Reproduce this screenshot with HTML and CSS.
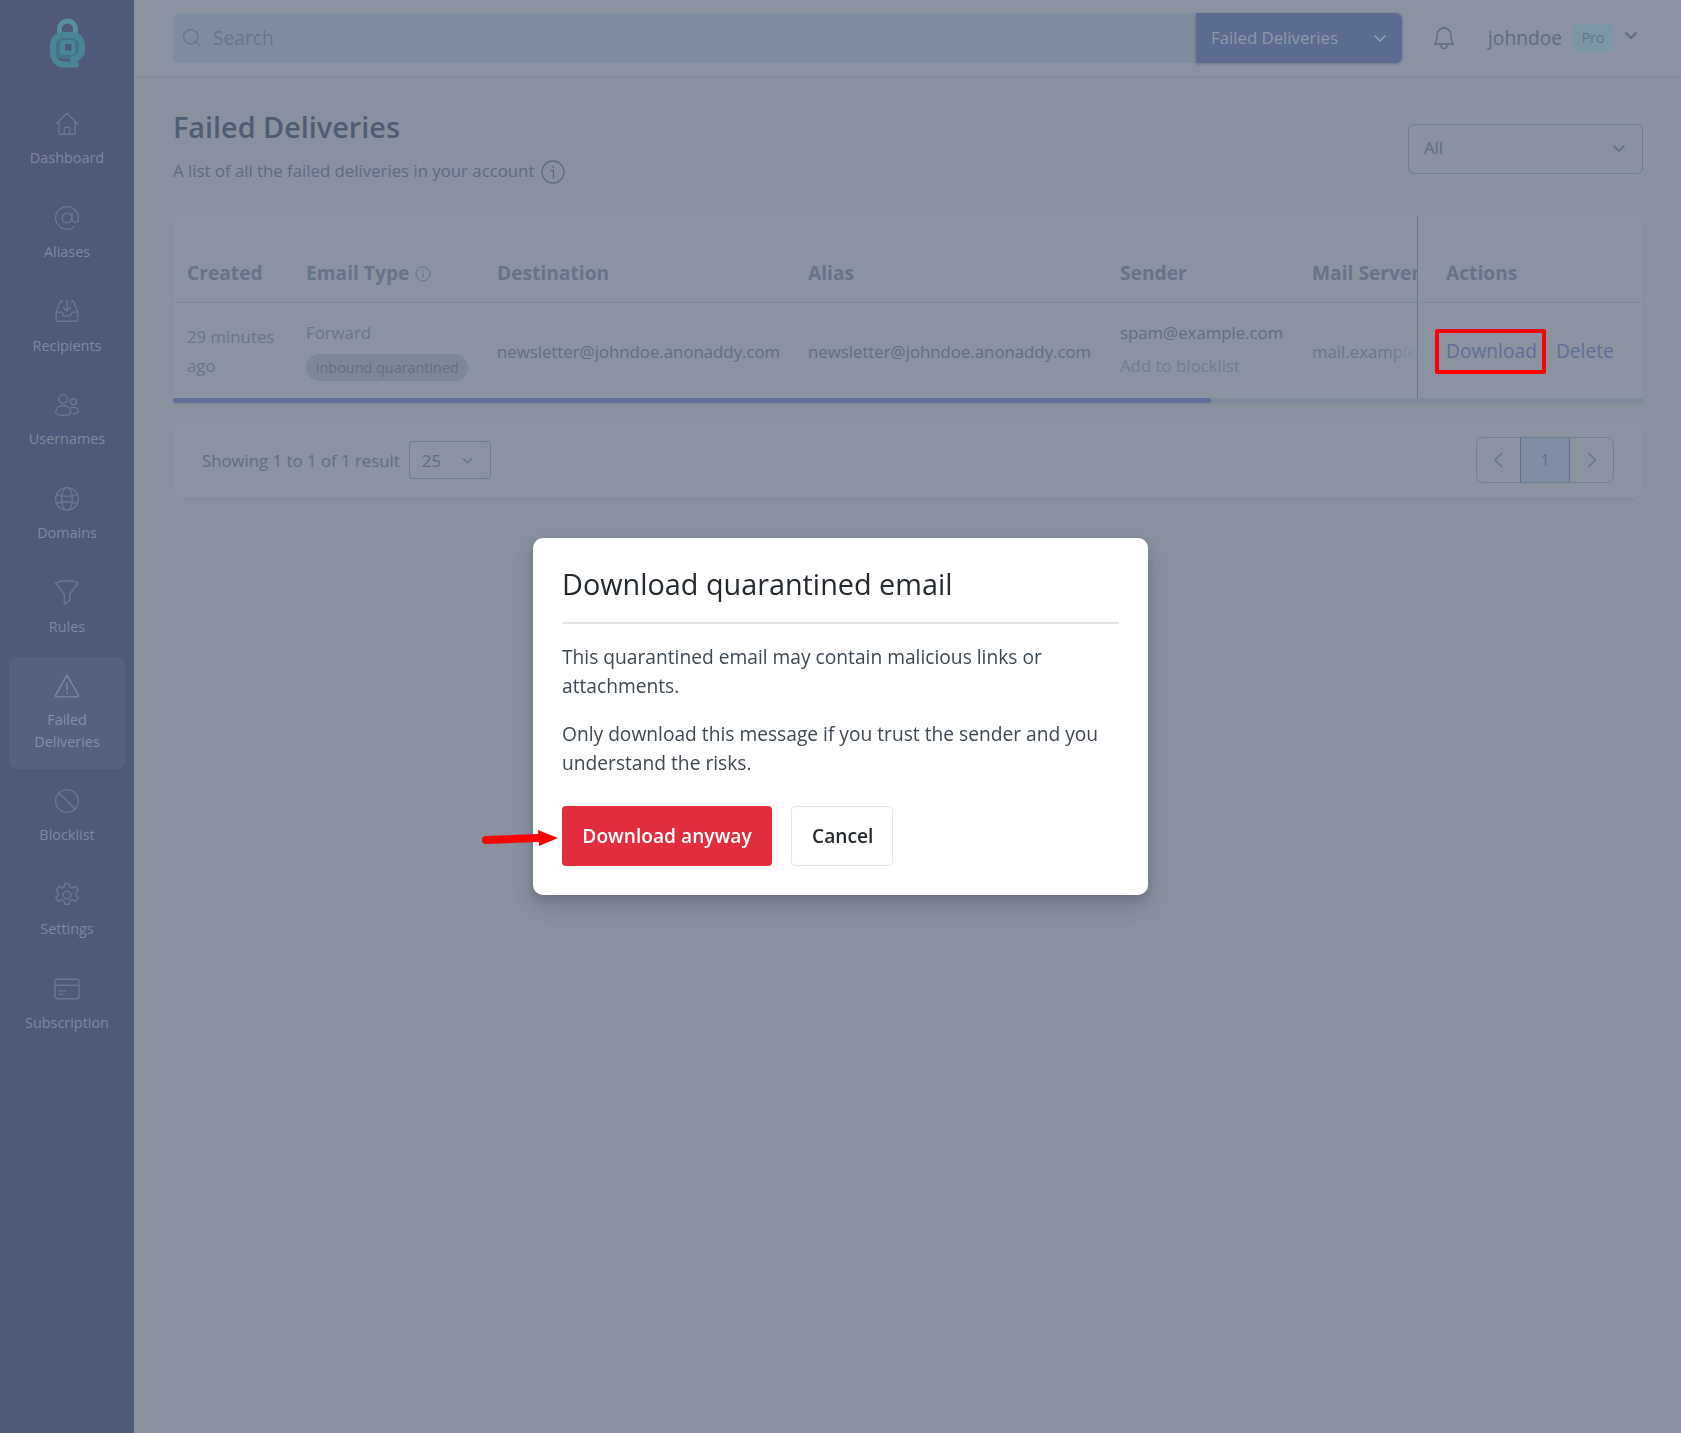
FILE: index.html
```html
<!DOCTYPE html>
<html lang="en">
<head>
<meta charset="utf-8">
<title>Failed Deliveries</title>
<link rel="stylesheet" href="styles.css">
</head>
<body>
<div class="app">
  <aside class="sidebar">
    <div class="logo">
      <svg viewBox="0 0 35 50" width="35" height="50" fill="none">
        <path d="M9.500 17V11a8 8 0 0 1 16 0v6" stroke="#588f9f" stroke-width="5"/>
        <rect x="5" y="19" width="25" height="22" rx="8" fill="#42748a"/>
        <path d="M26 46.500H14C7 46.500 3 41 3 34V28C3 21 7 17 14 17H21C28 17 32 21 32 28V31C32 37 28 41 23 41" stroke="#4a8495" stroke-width="6"/>
        <rect x="10" y="22" width="15" height="15" rx="3" fill="#4a8495"/>
        <rect x="15" y="26" width="6.500" height="6.500" fill="#4a5a74"/>
      </svg>
    </div>
    <nav class="nav">
      <a class="nav-item">
        <svg class="nav-icon" viewBox="0 0 24 24"><path d="M2 12 12 2l10 10M4.500 9.500V20a1.500 1.500 0 0 0 1.500 1.500h12a1.500 1.500 0 0 0 1.500-1.500V9.500M9.500 21.500V16a1 1 0 0 1 1-1h3a1 1 0 0 1 1 1v5.500"/></svg>
        <span>Dashboard</span>
      </a>
      <a class="nav-item">
        <svg class="nav-icon" viewBox="0 0 24 24"><circle cx="12" cy="12" r="4.500"/><path d="M16.500 7.500V13a3 3 0 0 0 6 0v-1a10.500 10.500 0 1 0-4.100 8.300"/></svg>
        <span>Aliases</span>
      </a>
      <a class="nav-item">
        <svg class="nav-icon" viewBox="0 0 24 24"><path d="M8 3H6L2 13v7a1.500 1.500 0 0 0 1.500 1.500h17A1.500 1.500 0 0 0 22 20v-7L18 3h-2M2 13h5l2 3.500h6l2-3.500h5M12 2v10M8.500 8.500 12 12l3.500-3.500"/></svg>
        <span>Recipients</span>
      </a>
      <a class="nav-item">
        <svg class="nav-icon" viewBox="0 0 24 24"><circle cx="8.500" cy="6.500" r="4"/><circle cx="18" cy="9" r="2.800"/><path d="M1.500 19c0-4 3-6.500 7-6.500s7 2.500 7 6.500c0 1.500-3 2.500-7 2.500s-7-1-7-2.500ZM16 14.500c3.500-1 6.500.5 6.500 3.500 0 1.200-2 2-5.500 2"/></svg>
        <span>Usernames</span>
      </a>
      <a class="nav-item">
        <svg class="nav-icon" viewBox="0 0 24 24"><circle cx="12" cy="12" r="10.500"/><ellipse cx="12" cy="12" rx="5" ry="10.500"/><path d="M2.500 8c5 2 14 2 19 0M2.500 16c5-2 14-2 19 0"/></svg>
        <span>Domains</span>
      </a>
      <a class="nav-item">
        <svg class="nav-icon" viewBox="0 0 24 24"><path d="M1.500 3.500c6-2.500 15-2.500 21 0L14.500 14v6l-5 3V14Z"/></svg>
        <span>Rules</span>
      </a>
      <a class="nav-item nav-item-active">
        <svg class="nav-icon" viewBox="0 0 24 24"><path d="M12 2 1.500 20.500a1 1 0 0 0 1 1.500h19a1 1 0 0 0 1-1.500ZM12 9.500v6M12 17.800v1.200"/></svg>
        <span>Failed Deliveries</span>
      </a>
      <a class="nav-item">
        <svg class="nav-icon" viewBox="0 0 24 24"><circle cx="12" cy="12" r="10.500"/><path d="M4.600 4.600 19.400 19.400"/></svg>
        <span>Blocklist</span>
      </a>
      <a class="nav-item">
        <svg class="nav-icon" viewBox="0 0 24 24"><circle cx="12" cy="12" r="3.500"/><path d="M10 1.500h4l.7 3.200 2.200 1 2.800-1.700 2.700 3.500-2.200 2.300v2.400l2.200 2.300-2.700 3.500-2.800-1.700-2.200 1-.7 3.200h-4l-.7-3.200-2.200-1-2.800 1.700-2.700-3.500 2.200-2.300v-2.400L2 7.500l2.800-3.500 2.500 1.700 2-1Z"/></svg>
        <span>Settings</span>
      </a>
      <a class="nav-item">
        <svg class="nav-icon" viewBox="0 0 24 24"><rect x="1" y="3" width="22" height="18" rx="2"/><path d="M1 8.500h22M4.500 14h6M4.500 17h3.500"/></svg>
        <span>Subscription</span>
      </a>
    </nav>
  </aside>
  <div class="main">
    <header class="topbar">
      <div class="search">
        <svg class="search-icon" viewBox="0 0 24 24"><circle cx="10.500" cy="10.500" r="8.500"/><path d="m17 17 5 5"/></svg>
        <span class="search-text">Search</span>
        <div class="search-scope">
          <span>Failed Deliveries</span>
          <svg class="chev chev-light" viewBox="0 0 16 16"><path d="m3 6 5 5 5-5"/></svg>
        </div>
      </div>
      <svg class="bell" viewBox="0 0 22 24"><path d="M1.500 18c1.500-1.500 2.500-3 2.500-6.500V9a7 7 0 0 1 14 0v2.500c0 3.500 1 5 2.500 6.500ZM11 2V1M8 18v1.500a3 3 0 0 0 6 0V18"/></svg>
      <div class="user">
        <span class="user-name">johndoe</span>
        <span class="badge-pro">Pro</span>
        <svg class="chev chev-user" viewBox="0 0 16 16"><path d="m3 5 5 5 5-5"/></svg>
      </div>
    </header>
    <main class="content">
      <div class="page-head">
        <div>
          <h1 class="page-title">Failed Deliveries</h1>
          <p class="page-sub">A list of all the failed deliveries in your account
            <svg class="info-icon" viewBox="0 0 24 24"><circle cx="12" cy="12" r="11"/><path d="M10 10.500h2.500V18M12 6.500v1"/></svg>
          </p>
        </div>
        <div class="filter"><span>All</span><svg class="chev" viewBox="0 0 16 16"><path d="m3 6 5 5 5-5"/></svg></div>
      </div>
      <div class="table-card">
        <div class="table-scroll">
          <div class="cols">
            <div class="col col-created">
              <div class="th">Created</div>
              <div class="td">29 minutes ago</div>
            </div>
            <div class="col col-type">
              <div class="th">Email Type <svg class="th-info" viewBox="0 0 24 24"><circle cx="12" cy="12" r="10.500"/><path d="M12 11v6M12 7v1"/></svg></div>
              <div class="td td-type"><span>Forward</span><span class="pill">Inbound quarantined</span></div>
            </div>
            <div class="col col-dest">
              <div class="th">Destination</div>
              <div class="td td-plain">newsletter@johndoe.anonaddy.com</div>
            </div>
            <div class="col col-alias">
              <div class="th">Alias</div>
              <div class="td td-plain">newsletter@johndoe.anonaddy.com</div>
            </div>
            <div class="col col-sender">
              <div class="th">Sender</div>
              <div class="td td-sender"><span>spam@example.com</span><span class="muted">Add to blocklist</span></div>
            </div>
            <div class="col col-server">
              <div class="th">Mail Server</div>
              <div class="td td-plain td-server">mail.example.com<i class="fade"></i></div>
            </div>
            <div class="col col-actions">
              <div class="th">Actions</div>
              <div class="td td-actions"><a class="link link-marked">Download</a><a class="link">Delete</a></div>
            </div>
          </div>
          <div class="scrollbar"><div class="scroll-thumb"></div></div>
        </div>
      </div>
      <div class="pager-card">
        <div class="pager-left">
          <span>Showing 1 to 1 of 1 result</span>
          <div class="per-page"><span>25</span><svg class="chev" viewBox="0 0 16 16"><path d="m3 6 5 5 5-5"/></svg></div>
        </div>
        <div class="pager">
          <span class="page-btn"><svg viewBox="0 0 16 16"><path d="M10.500 2 4.500 8l6 6"/></svg></span>
          <span class="page-btn page-current">1</span>
          <span class="page-btn"><svg viewBox="0 0 16 16"><path d="m5 2 6 6-6 6"/></svg></span>
        </div>
      </div>
    </main>
  </div>
</div>
<div class="modal-layer">
  <div class="modal">
    <h2 class="modal-title">Download quarantined email</h2>
    <p class="modal-text">This quarantined email may contain malicious links or attachments.</p>
    <p class="modal-text">Only download this message if you trust the sender and you understand the risks.</p>
    <div class="modal-actions">
      <svg class="arrow" viewBox="0 0 76 18"><path d="M4 11 56 9" stroke="#f00" stroke-width="8" stroke-linecap="round"/><path d="M56 1 76 9 57 17Z" fill="#f00"/></svg>
      <button class="btn btn-danger">Download anyway</button>
      <button class="btn btn-plain">Cancel</button>
    </div>
  </div>
</div>
</body>
</html>
```
FILE: styles.css
```css
* { box-sizing: border-box; }
html, body { margin: 0; height: 100%; }
body {
  font-family: "Open Sans", "Noto Sans", sans-serif;
  background: #89919f;
  color: #5f6b7e;
  font-size: 16.800px;
}
svg { fill: none; stroke: currentColor; stroke-linecap: round; stroke-linejoin: round; }
p, h1, h2 { margin: 0; }

.app { display: flex; height: 1433px; overflow: hidden; }

.sidebar { width: 134px; flex: none; background: #4e5a78; color: #7f889d; }
.logo { height: 76px; padding-top: 18px; display: flex; justify-content: center; }
.logo svg { stroke: none; }
.nav { display: flex; flex-direction: column; align-items: center; padding-top: 19px; gap: 3.500px; }
.nav-item {
  width: 116px;
  padding: 16px 8px 16.400px;
  border-radius: 8px;
  display: flex;
  flex-direction: column;
  align-items: center;
  gap: 10.200px;
  text-align: center;
  font-size: 14.400px;
  line-height: 21.600px;
}
.nav-item-active { background: #55617f; color: #868fa3; }
.nav-icon { width: 26px; height: 26px; stroke-width: 1.300; flex: none; color: #6c7690; }
.nav-item-active .nav-icon { color: #7f889d; }

.main { flex: 1; min-width: 0; display: flex; flex-direction: column; }
.topbar {
  height: 77px;
  flex: none;
  display: flex;
  align-items: center;
  padding: 0 38px 0 39px;
  border-bottom: 1px solid #7f8a99;
  background: #8b93a1;
}
.search {
  width: 1229px;
  height: 50px;
  background: #7e8c9e;
  border-radius: 6px;
  display: flex;
  align-items: center;
  padding-left: 9px;
  color: #687689;
}
.search-icon { width: 20px; height: 20px; stroke-width: 1.500; }
.search-text { margin-left: 11px; margin-bottom: 2px; font-size: 19.200px; }
.search-scope {
  margin-left: auto;
  width: 206px;
  height: 50px;
  background: #5c6b8f;
  color: #8f99ad;
  border-radius: 0 6px 6px 0;
  display: flex;
  align-items: center;
  justify-content: space-between;
  padding: 0 14px 2px 15px;
  font-size: 16.800px;
  box-shadow: 0 1px 3px rgba(60, 70, 90, .4);
}
.chev { width: 16px; height: 16px; stroke-width: 1.500; flex: none; }
.chev-light { color: #97a1b4; margin-top: 2px; }
.bell { width: 22px; height: 24px; stroke-width: 1.300; margin-left: 31px; color: #5d697c; }
.user { display: flex; align-items: center; margin-left: 33px; }
.user-name { font-size: 19.200px; color: #5f6b7e; margin-bottom: 2px; }
.badge-pro {
  margin-left: 10px;
  width: 42px;
  height: 28px;
  padding-bottom: 2px;
  background: #7b98a2;
  color: #5f7788;
  border-radius: 5px;
  font-size: 14.400px;
  display: flex;
  align-items: center;
  justify-content: center;
}
.chev-user { margin-left: 9px; margin-top: -4px; stroke-width: 2; color: #5f6b7e; }

.content { padding: 0 38px 0 39px; }
.page-head { height: 139px; display: flex; justify-content: space-between; padding-top: 27px; }
.page-title { font-size: 28.800px; font-weight: 600; line-height: 46px; color: #4f5d72; }
.page-sub { display: flex; align-items: center; gap: 7px; margin-top: 4px; font-size: 16.800px; line-height: 34px; color: #5f6b7e; }
.info-icon { width: 24px; height: 24px; stroke-width: 1.300; margin-top: 2px; }
.filter {
  width: 235px;
  height: 50px;
  margin-top: 20px;
  border: 1px solid #6f7c90;
  border-radius: 6px;
  padding: 0 15px 3px 15px;
  display: flex;
  align-items: center;
  justify-content: space-between;
  font-size: 16.800px;
}

.table-card { background: #8a939f; border-radius: 6px 6px 4px 4px; box-shadow: 0 1px 2px rgba(70, 80, 100, .12); }
.cols { display: flex; height: 182px; }
.col { display: flex; flex-direction: column; flex: none; }
.th {
  height: 87px;
  padding-top: 44px;
  border-bottom: 1px solid #7f8b98;
  font-size: 19.200px;
  font-weight: 700;
  line-height: 26px;
  color: #677486;
  white-space: nowrap;
  display: flex;
  gap: 6px;
}
.td { flex: 1; display: flex; align-items: center; font-size: 16.800px; white-space: nowrap; color: #626e81; }
.td-plain { padding-top: 2px; }
.th-info { width: 16px; height: 16px; stroke-width: 1.500; margin-top: 6px; }
.col-created { width: 133px; padding-left: 14px; }
.col-created .th { margin-left: -14px; padding-left: 14px; }
.col-created .td { white-space: normal; line-height: 29px; width: 100px; margin-top: 1px; color: #6a7689; }
.col-type { width: 191px; }
.td-type { flex-direction: column; align-items: flex-start; justify-content: center; gap: 10px; color: #6a7689; }
.pill {
  height: 27px;
  padding: 0 9.500px;
  border-radius: 14px;
  background: #7d8896;
  color: #647082;
  font-size: 14.400px;
  display: flex;
  align-items: center;
}
.col-dest { width: 311px; }
.col-alias { width: 312px; }
.col-sender { width: 192px; }
.td-sender { flex-direction: column; align-items: flex-start; justify-content: center; gap: 9.500px; padding-bottom: 3px; }
.muted { color: #717d90; }
.col-server { width: 105px; overflow: hidden; position: relative; }
.td-server { color: #6a7689; position: relative; }
.fade { position: absolute; top: 0; bottom: 0; right: 0; width: 30px; background: linear-gradient(to right, rgba(138, 147, 159, 0), #8a939f); }
.col-actions { flex: 1; border-left: 1px solid #69778a; padding-left: 28px; }
.col-actions .th { margin-left: -28px; padding-left: 28px; }
.td-actions { gap: 19px; }
.link { color: #5f6f99; position: relative; font-size: 19.200px; }
.link-marked::after {
  content: "";
  position: absolute;
  top: -8px;
  bottom: -10px;
  left: -11px;
  right: -9px;
  border: 4px solid #f00;
  border-radius: 2px;
}
.scrollbar { height: 5px; background: #7e8a9b; border-radius: 0 0 4px 4px; }
.scroll-thumb { width: 1038px; height: 5px; background: #5f6f99; border-radius: 3px; }

.pager-card {
  margin-top: 19px;
  height: 76px;
  background: #8a939f;
  border-radius: 10px;
  display: flex;
  align-items: center;
  justify-content: space-between;
  padding: 0 29px;
  box-shadow: 0 1px 2px rgba(70, 80, 100, .12);
}
.pager-left { display: flex; align-items: center; gap: 9px; font-size: 16.800px; color: #626e81; }
.per-page {
  width: 82px;
  height: 38px;
  border: 1px solid #6f7c90;
  border-radius: 4px;
  display: flex;
  align-items: center;
  justify-content: space-between;
  padding: 0 16px 0 12px;
  font-size: 16.800px;
}
.per-page .chev { width: 13px; height: 13px; }
.pager { display: flex; height: 46px; border: 1px solid #727e90; border-radius: 7px; overflow: hidden; color: #69758a; }
.page-btn { width: 43px; display: flex; align-items: center; justify-content: center; font-size: 16px; }
.page-btn svg { width: 18px; height: 18px; stroke-width: 1.300; }
.page-current { width: 50px; background: #7f8ea0; border-left: 1px solid #5f6f99; border-right: 1px solid #5f6f99; color: #5f6f99; }

.modal-layer { position: fixed; inset: 0; pointer-events: none; }
.modal {
  position: absolute;
  left: 533px;
  top: 538px;
  width: 615px;
  height: 357px;
  padding: 21px 29px 29px;
  background: #fff;
  border-radius: 10px;
  box-shadow: 0 10px 20px rgba(50, 55, 70, .25), 0 4px 8px rgba(50, 55, 70, .15);
  color: #3d4852;
  font-size: 19.200px;
  line-height: 29px;
  pointer-events: auto;
}
.modal-title {
  font-size: 28.800px;
  font-weight: 400;
  line-height: 50px;
  color: #22292f;
  padding-bottom: 13px;
  border-bottom: 2px solid #e2e6ea;
  margin-bottom: 18px;
}
.modal-text { margin-bottom: 19px; }
.modal-actions { position: relative; display: flex; gap: 19px; margin-top: 29px; }
.btn {
  height: 60px;
  font: 600 19.200px "Open Sans", sans-serif;
  border-radius: 4px;
  padding: 0 20px 2px;
}
.btn-danger { width: 210px; background: #e32c3c; color: #fff; border: none; }
.btn-plain { width: 102px; background: #fff; color: #22292f; border: 1px solid #e2e6ea; }
.arrow { position: absolute; left: -80px; top: 23px; width: 76px; height: 18px; stroke: none; }
```
